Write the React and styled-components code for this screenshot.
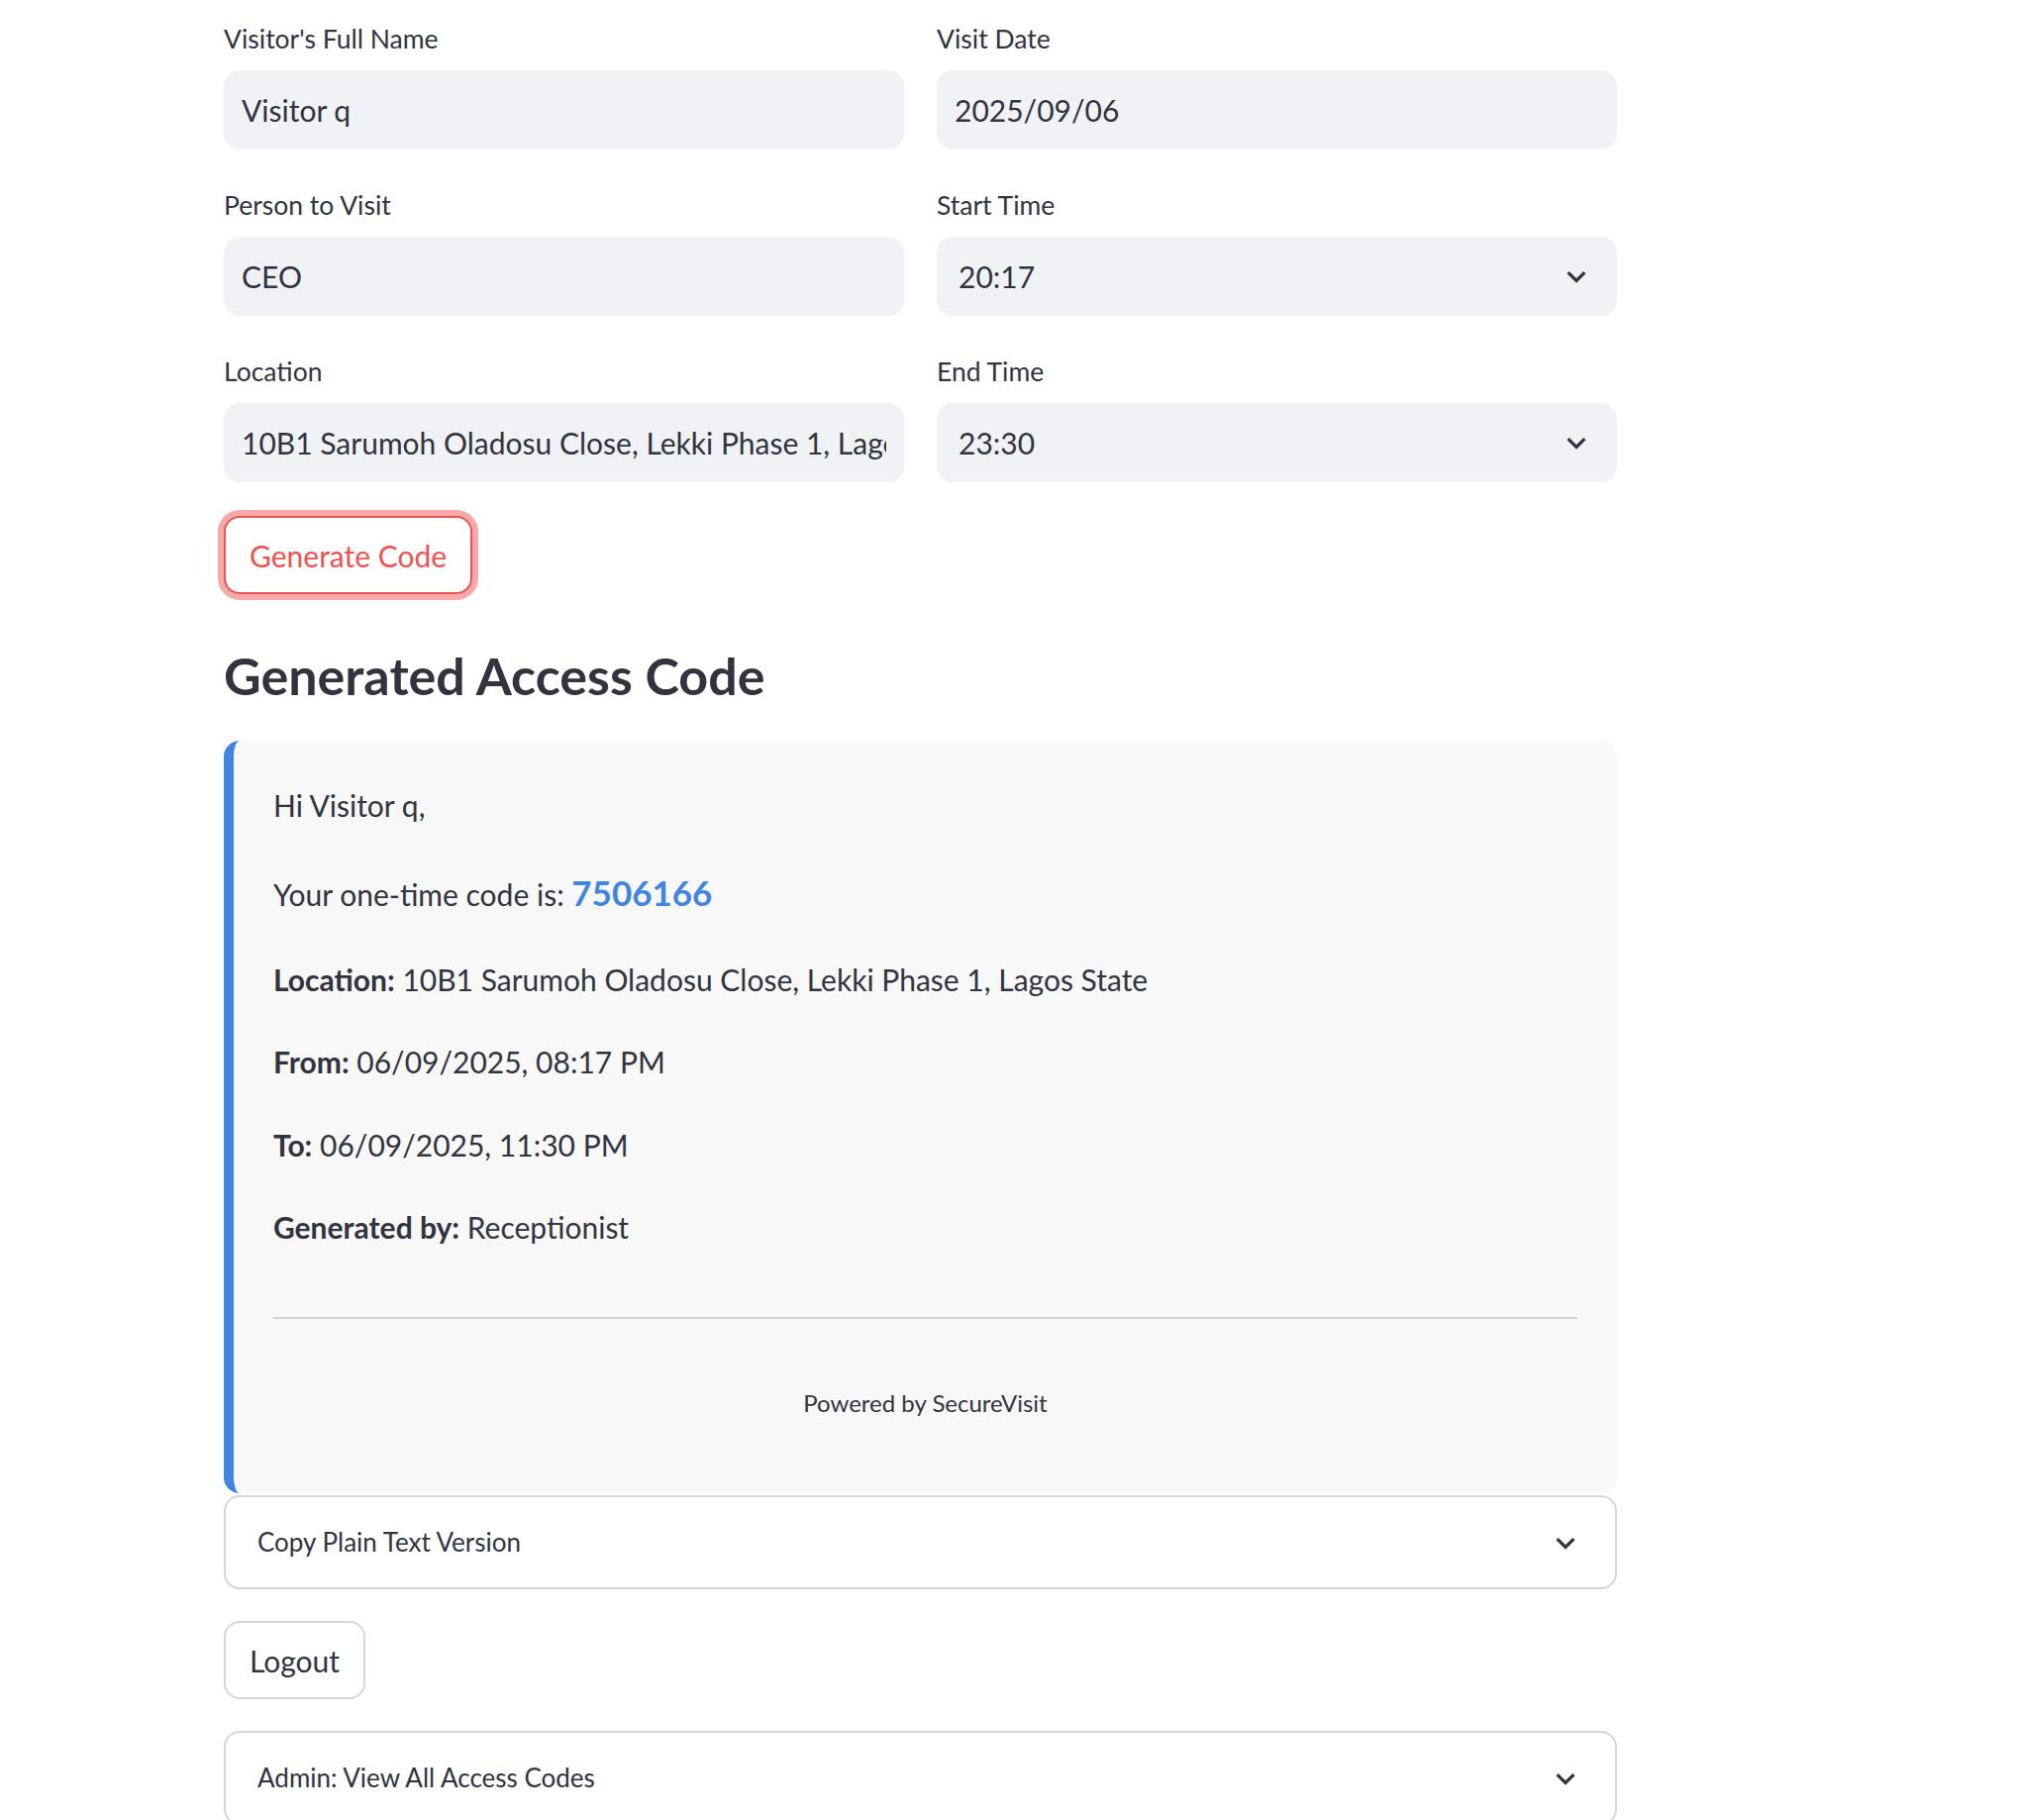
import React from 'react';
import styled, { createGlobalStyle } from 'styled-components';

const GlobalStyle = createGlobalStyle`
  body {
    margin: 0;
    background: #ffffff;
    color: #31333f;
    font-family: Lato, "Noto Sans", sans-serif;
  }
  * {
    box-sizing: border-box;
  }
`;

const Page = styled.div`
  width: 1407px;
  margin-left: 226px;
  padding-top: 15px;
  display: flex;
  flex-direction: column;
`;

const FormGrid = styled.div`
  display: grid;
  grid-template-columns: 1fr 1fr;
  column-gap: 33px;
`;

const Column = styled.div`
  display: flex;
  flex-direction: column;
  gap: 32px;
`;

const Field = styled.div`
  display: flex;
  flex-direction: column;
`;

const Label = styled.label`
  font-size: 26.5px;
  line-height: 48px;
  margin-bottom: 8px;
`;

const TextInput = styled.input`
  height: 80px;
  width: 100%;
  border: none;
  outline: none;
  border-radius: 16px;
  background: #f0f2f6;
  padding: 0 18px;
  font: inherit;
  font-size: 30px;
  color: #31333f;
`;

const SelectBox = styled.div`
  height: 80px;
  border-radius: 16px;
  background: #f0f2f6;
  padding: 0 27px 0 22px;
  display: flex;
  align-items: center;
  justify-content: space-between;
  font-size: 30px;
`;

const Button = styled.button`
  align-self: flex-start;
  height: 79px;
  padding: 0 24px;
  border-radius: 16px;
  background: #ffffff;
  font: inherit;
  font-size: 30px;
  border: 2px solid ${(p) => (p.$focused ? '#eb5452' : 'rgba(49, 51, 63, 0.2)')};
  color: ${(p) => (p.$focused ? '#eb5452' : '#31333f')};
  box-shadow: ${(p) => (p.$focused ? '0 0 0 6px rgba(235, 84, 82, 0.5)' : 'none')};
  margin-top: ${(p) => p.$top}px;
  cursor: pointer;
`;

const Heading = styled.h3`
  margin: 32px 0 0;
  padding-top: 16px;
  font-size: 52px;
  line-height: 68px;
  font-weight: 700;
`;

const Card = styled.div`
  margin-top: 32px;
  background: #f8f8f8;
  border-left: 10px solid #4285e0;
  border-radius: 16px;
  padding: 40px;
  font-size: 30px;
  line-height: 51.2px;
`;

const Para = styled.p`
  margin: 0 0 32px;
`;

const Code = styled.span`
  color: #4285e0;
  font-weight: 700;
  font-size: 35px;
  line-height: 61px;
`;

const Rule = styled.hr`
  margin: 65px 0 66px;
  border: none;
  border-top: 2px solid #d0d0d0;
`;

const Footer = styled.p`
  margin: 0 0 32px;
  text-align: center;
  font-size: 24px;
  line-height: 38px;
`;

const Expander = styled.div`
  margin-top: ${(p) => p.$top}px;
  border: 2px solid #d6d6d8;
  border-radius: 16px;
  padding: 24px 36px 24px 32px;
  display: flex;
  align-items: center;
  justify-content: space-between;
  font-size: 26px;
  line-height: 43px;
`;

const Chevron = () => (
  <svg width="28" height="28" viewBox="0 0 24 24" fill="none">
    <path d="M4.8 8.6l7.2 7.2 7.2-7.2" stroke="#31333f" strokeWidth="2.8" />
  </svg>
);

const fields = {
  left: [
    { label: "Visitor's Full Name", value: 'Visitor q' },
    { label: 'Person to Visit', value: 'CEO' },
    { label: 'Location', value: '10B1 Sarumoh Oladosu Close, Lekki Phase 1, Lagos State' },
  ],
  right: [
    { label: 'Visit Date', value: '2025/09/06' },
    { label: 'Start Time', value: '20:17', select: true },
    { label: 'End Time', value: '23:30', select: true },
  ],
};

const FieldItem = ({ label, value, select }) => (
  <Field>
    <Label>{label}</Label>
    {select ? (
      <SelectBox>
        <span>{value}</span>
        <Chevron />
      </SelectBox>
    ) : (
      <TextInput readOnly value={value} />
    )}
  </Field>
);

export default function App() {
  return (
    <>
      <GlobalStyle />
      <Page>
        <FormGrid>
          <Column>
            {fields.left.map((f) => (
              <FieldItem key={f.label} {...f} />
            ))}
          </Column>
          <Column>
            {fields.right.map((f) => (
              <FieldItem key={f.label} {...f} />
            ))}
          </Column>
        </FormGrid>

        <Button $focused $top={34}>Generate Code</Button>

        <Heading>Generated Access Code</Heading>

        <Card>
          <Para>Hi Visitor q,</Para>
          <Para>
            Your one-time code is: <Code>7506166</Code>
          </Para>
          <Para>
            <b>Location:</b> 10B1 Sarumoh Oladosu Close, Lekki Phase 1, Lagos State
          </Para>
          <Para>
            <b>From:</b> 06/09/2025, 08:17 PM
          </Para>
          <Para>
            <b>To:</b> 06/09/2025, 11:30 PM
          </Para>
          <Para>
            <b>Generated by:</b> Receptionist
          </Para>
          <Rule />
          <Footer>Powered by SecureVisit</Footer>
        </Card>

        <Expander $top={2}>
          <span>Copy Plain Text Version</span>
          <Chevron />
        </Expander>

        <Button $top={32}>Logout</Button>

        <Expander $top={32}>
          <span>Admin: View All Access Codes</span>
          <Chevron />
        </Expander>
      </Page>
    </>
  );
}
